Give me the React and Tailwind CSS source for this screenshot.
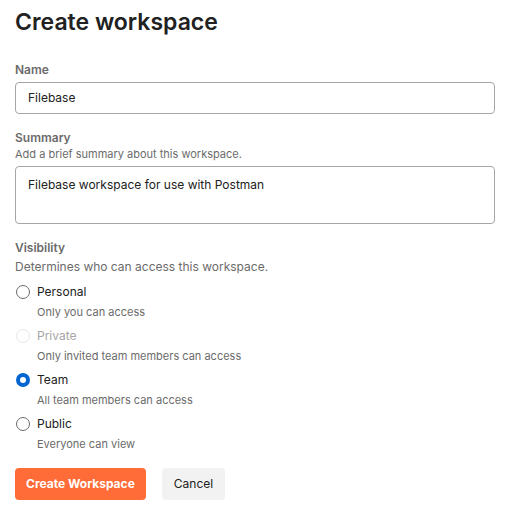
import React from "react";

const options = [
  { label: "Personal", sub: "Only you can access", state: "off" },
  { label: "Private", sub: "Only invited team members can access", state: "disabled" },
  { label: "Team", sub: "All team members can access", state: "on" },
  { label: "Public", sub: "Everyone can view", state: "off" },
];

function Radio({ state }) {
  if (state === "on")
    return <span className="block w-[14px] h-[14px] rounded-full border-[4px] border-[#0265d2] bg-white" />;
  if (state === "disabled")
    return <span className="block w-[14px] h-[14px] rounded-full border border-[#e6e6e6] bg-white" />;
  return <span className="block w-[14px] h-[14px] rounded-full border border-[#6b6b6b] bg-white" />;
}

export default function App() {
  return (
    <div className="w-[510px] h-[525px] bg-white px-[15px] pt-[6px] text-[#212121]" style={{ fontFamily: "Inter, 'Noto Sans', sans-serif" }}>
      <h1 className="text-[23px] leading-[32px] font-semibold">Create workspace</h1>

      <div className="mt-[24px] text-[12px] leading-[16px] font-semibold text-[#6b6b6b]">Name</div>
      <div className="mt-[4px] h-[32px] w-[480px] rounded-[4px] border border-[#a6a6a6] px-[12px] flex items-center text-[12px]">
        Filebase
      </div>

      <div className="mt-[16px] text-[12px] leading-[16px] font-semibold text-[#6b6b6b]">Summary</div>
      <div className="text-[11px] leading-[16px] text-[#6b6b6b]">Add a brief summary about this workspace.</div>
      <div className="mt-[4px] h-[58px] w-[480px] rounded-[4px] border border-[#a6a6a6] px-[12px] pt-[8px] text-[12px] leading-[20px]">
        Filebase workspace for use with Postman
      </div>

      <div className="mt-[16px] text-[12px] leading-[16px] font-semibold text-[#6b6b6b]">Visibility</div>
      <div className="mt-[1px] text-[12px] leading-[20px] text-[#6b6b6b]">Determines who can access this workspace.</div>

      <div className="mt-[5px] flex flex-col gap-[6px]">
        {options.map((o) => (
          <div key={o.label} className="flex flex-col gap-[2px]">
            <div className="flex items-center gap-[7px] h-[20px]">
              <span className="ml-[1px]"><Radio state={o.state} /></span>
              <span className={"text-[12px] leading-[20px] " + (o.state === "disabled" ? "text-[#a6a6a6]" : "text-[#212121]")}>{o.label}</span>
            </div>
            <div className="pl-[22px] text-[11px] leading-[16px] text-[#6b6b6b]">{o.sub}</div>
          </div>
        ))}
      </div>

      <div className="mt-[16px] flex gap-[16px]">
        <button className="h-[32px] px-[11px] rounded-[4px] bg-[#ff6c37] text-white text-[12px] font-bold">Create Workspace</button>
        <button className="h-[32px] px-[12px] rounded-[4px] bg-[#f2f2f2] text-[#212121] text-[12px]">Cancel</button>
      </div>
    </div>
  );
}
